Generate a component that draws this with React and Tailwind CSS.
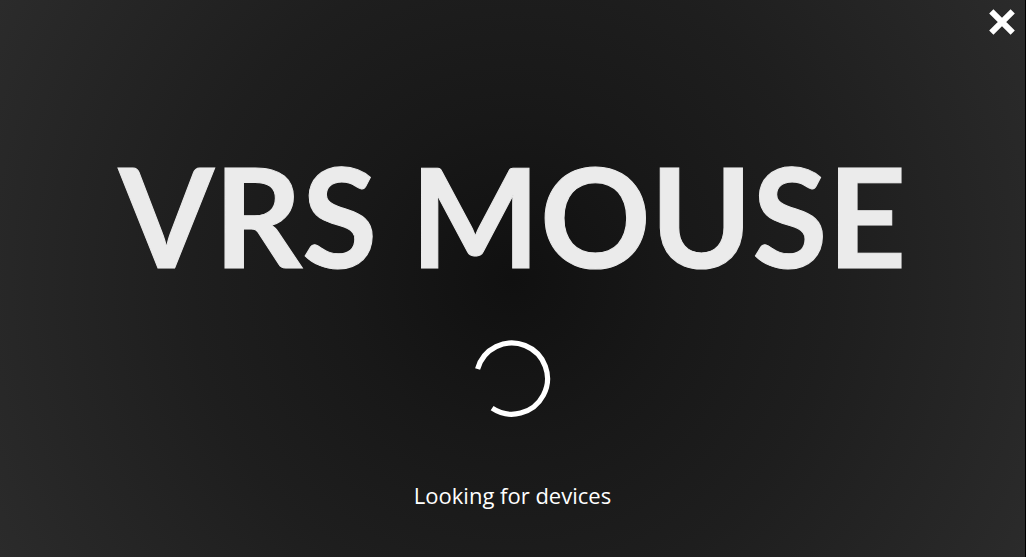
function CloseIcon() {
  return (
    <svg viewBox="0 0 26 26" className="size-[26px]" fill="none" stroke="currentColor" strokeWidth="6" aria-hidden="true">
      <path d="M2.3 2.3 23.7 23.7M23.7 2.3 2.3 23.7" />
    </svg>
  );
}

function Spinner() {
  return (
    <svg viewBox="0 0 78 78" className="size-[78px]" fill="none" stroke="currentColor" strokeWidth="5.2" role="progressbar" aria-labelledby="status">
      <path d="M3.6 30A35.6 35.6 0 1 1 18.1 69.2" />
    </svg>
  );
}

export default function App() {
  return (
    <main className="relative flex min-h-screen flex-col items-center border-r border-black bg-[#1c1c1c] bg-[radial-gradient(circle_at_center,#101010_0%,#181818_28%,#1e1e1e_55%,#2b2b2b_100%)] text-white">
      <button type="button" aria-label="Close" className="absolute top-[9px] right-[10px]">
        <CloseIcon />
      </button>
      <h1 className="mt-[146px] font-['Lato',sans-serif] text-[137px] leading-[138px] font-bold whitespace-nowrap text-[#ebebeb] [-webkit-text-stroke:1px_#ebebeb]">
        VRS MOUSE
      </h1>
      <div className="mt-[55px]">
        <Spinner />
      </div>
      <p id="status" className="mt-[63px] font-['Open_Sans',sans-serif] text-[22px] leading-[30px]">
        Looking for devices
      </p>
    </main>
  );
}
